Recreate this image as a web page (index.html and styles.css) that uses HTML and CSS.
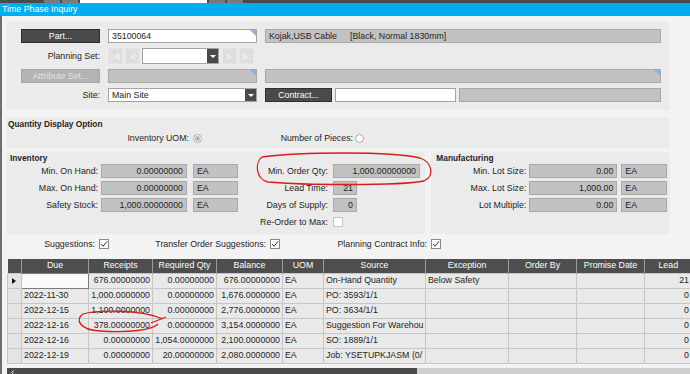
FILE: index.html
```html
<!DOCTYPE html>
<html lang="en">
<head>
  <meta charset="UTF-8" />
  <title>Time Phase Inquiry</title>
  <link rel="stylesheet" href="styles.css">
</head>
<body>
  <div class="topstrip">
    <span class="ts-grey"></span><span class="ts-grey"></span><span class="ts-white"></span><span class="ts-grey"></span><span class="ts-grey"></span>
  </div>
  <div class="titlebar">Time Phase Inquiry</div>

  <div class="main">
    <!-- Part / site header -->
    <div class="panel head">
      <div class="btn">Part...</div>
      <div class="field white corner">35100064</div>
      <div class="field">Kojak,USB Cable<span class="desc-gap">[Black, Normal 1830mm]</span></div>

      <div class="lbl">Planning Set:</div>
      <div class="nav">
        <span class="nav-btn"><svg width="9" height="9" viewBox="0 0 9 9"><path d="M1 1v7M8 1L3 4.5 8 8z" fill="#ececec" stroke="#ececec"/></svg></span>
        <span class="nav-btn"><svg width="9" height="9" viewBox="0 0 9 9"><path d="M7 1L2 4.5 7 8z" fill="#ececec"/></svg></span>
        <div class="combo"><span class="combo-text"></span><span class="drop"></span></div>
        <span class="nav-btn"><svg width="9" height="9" viewBox="0 0 9 9"><path d="M2 1l5 3.5L2 8z" fill="#ececec"/></svg></span>
        <span class="nav-btn"><svg width="9" height="9" viewBox="0 0 9 9"><path d="M8 1v7M1 1l5 3.5L1 8z" fill="#ececec" stroke="#ececec"/></svg></span>
      </div>
      <div></div>

      <div class="btn disabled">Attribute Set...</div>
      <div class="field corner"></div>
      <div class="field corner"></div>

      <div class="lbl">Site:</div>
      <div class="combo"><span class="combo-text">Main Site</span><span class="drop"></span></div>
      <div class="contract-row">
        <div class="btn contract">Contract...</div>
        <div class="field white contract-input"></div>
        <div class="field fill"></div>
      </div>
    </div>

    <!-- Quantity display option -->
    <div class="panel qty">
      <div class="title">Quantity Display Option</div>
      <div class="qty-row">
        <span class="lbl uom-lbl">Inventory UOM:</span><span class="radio checked"></span>
        <span class="lbl pcs-lbl">Number of Pieces:</span><span class="radio"></span>
      </div>
    </div>

    <!-- Inventory / manufacturing -->
    <div class="lower">
      <div class="panel inv">
        <div class="title pad">Inventory</div>
        <div class="inv-body">
          <div class="stack">
            <div class="row"><span class="lbl w92">Min. On Hand:</span><div class="field num f86">0.00000000</div><div class="field ea">EA</div></div>
            <div class="row"><span class="lbl w92">Max. On Hand:</span><div class="field num f86">0.00000000</div><div class="field ea">EA</div></div>
            <div class="row"><span class="lbl w92">Safety Stock:</span><div class="field num f86">1,000.00000000</div><div class="field ea">EA</div></div>
          </div>
          <div class="stack">
            <div class="row"><span class="lbl w90">Min. Order Qty:</span><div class="field num f87">1,000.00000000</div></div>
            <div class="row"><span class="lbl w90">Lead Time:</span><div class="field num f24">21</div></div>
            <div class="row"><span class="lbl w90">Days of Supply:</span><div class="field num f24">0</div></div>
            <div class="row"><span class="lbl w90">Re-Order to Max:</span><span class="check empty"></span></div>
          </div>
        </div>
      </div>
      <div class="panel mfg">
        <div class="title pad">Manufacturing</div>
        <div class="stack">
          <div class="row"><span class="lbl w95">Min. Lot Size:</span><div class="field num f88">0.00</div><div class="field ea2">EA</div></div>
          <div class="row"><span class="lbl w95">Max. Lot Size:</span><div class="field num f88">1,000.00</div><div class="field ea2">EA</div></div>
          <div class="row"><span class="lbl w95">Lot Multiple:</span><div class="field num f88">0.00</div><div class="field ea2">EA</div></div>
        </div>
      </div>
    </div>

    <div class="checks">
      <span class="lbl c1">Suggestions:</span>
      <span class="check"><svg width="10" height="10" viewBox="0 0 10 10"><path d="M2 5l2 2.3L8 2.3" fill="none" stroke="#333" stroke-width="1"/></svg></span>
      <span class="lbl c2">Transfer Order Suggestions:</span>
      <span class="check"><svg width="10" height="10" viewBox="0 0 10 10"><path d="M2 5l2 2.3L8 2.3" fill="none" stroke="#333" stroke-width="1"/></svg></span>
      <span class="lbl c3">Planning Contract Info:</span>
      <span class="check"><svg width="10" height="10" viewBox="0 0 10 10"><path d="M2 5l2 2.3L8 2.3" fill="none" stroke="#333" stroke-width="1"/></svg></span>
    </div>

    <!-- Time phase grid -->
    <div class="grid-wrap">
      <table class="grid">
        <colgroup>
          <col style="width:14px"><col style="width:67px"><col style="width:64px"><col style="width:64px">
          <col style="width:66px"><col style="width:41px"><col style="width:102px"><col style="width:83px">
          <col style="width:68px"><col style="width:68px"><col style="width:47px">
        </colgroup>
        <thead>
          <tr><th></th><th>Due</th><th>Receipts</th><th>Required Qty</th><th>Balance</th><th>UOM</th><th>Source</th><th>Exception</th><th>Order By</th><th>Promise Date</th><th>Lead</th></tr>
        </thead>
        <tbody>
          <tr class="current"><td class="rh"><span class="arrow"></span></td><td class="focus"></td><td class="r">676.00000000</td><td class="r">0.00000000</td><td class="r">676.00000000</td><td>EA</td><td>On-Hand Quantity</td><td>Below Safety</td><td></td><td></td><td class="r">21</td></tr>
          <tr><td class="rh"></td><td>2022-11-30</td><td class="r">1,000.0000000</td><td class="r">0.00000000</td><td class="r">1,676.0000000</td><td>EA</td><td>PO: 3593/1/1</td><td></td><td></td><td></td><td class="r">0</td></tr>
          <tr><td class="rh"></td><td>2022-12-15</td><td class="r">1,100.0000000</td><td class="r">0.00000000</td><td class="r">2,776.0000000</td><td>EA</td><td>PO: 3634/1/1</td><td></td><td></td><td></td><td class="r">0</td></tr>
          <tr><td class="rh"></td><td>2022-12-16</td><td class="r">378.00000000</td><td class="r">0.00000000</td><td class="r">3,154.0000000</td><td>EA</td><td>Suggestion For Warehou</td><td></td><td></td><td></td><td class="r">0</td></tr>
          <tr><td class="rh"></td><td>2022-12-16</td><td class="r">0.00000000</td><td class="r">1,054.0000000</td><td class="r">2,100.0000000</td><td>EA</td><td>SO: 1889/1/1</td><td></td><td></td><td></td><td class="r">0</td></tr>
          <tr><td class="rh"></td><td>2022-12-19</td><td class="r">0.00000000</td><td class="r">20.00000000</td><td class="r">2,080.0000000</td><td>EA</td><td>Job: YSETUPKJASM (0/</td><td></td><td></td><td></td><td class="r">0</td></tr>
        </tbody>
      </table>
    </div>
    <div class="hscroll">
      <div class="thumb"><svg width="6" height="7" viewBox="0 0 6 7"><path d="M4 1.5L1.5 3.5 4 5.5" fill="none" stroke="#ddd"/></svg></div>
      <div class="track"></div>
    </div>
  </div>

  <!-- red hand-drawn markup -->
  <svg class="marks" width="690" height="374" viewBox="0 0 690 374">
    <path d="M262 157 C300 152 390 151 420 158 C432 162 435 176 424 181 C400 186 300 185 268 182 C255 179 255 162 262 157" fill="none" stroke="#d91c1c" stroke-width="1.3"/>
    <path d="M163 319 C140 309 96 310 83 314 C75 319 79 330 100 331 C130 333 152 330 158 324 M151 323 L166 317" fill="none" stroke="#d91c1c" stroke-width="1.3"/>
  </svg>
</body>
</html>
```

FILE: styles.css
```css
* {
  box-sizing: border-box;
}
body {
  margin: 0;
  width: 690px;
  height: 374px;
  overflow: hidden;
  position: relative;
  background: #f3f3f4;
  font-family: "Liberation Sans", Arial, sans-serif;
  font-size: 8.8px;
  color: #1e1e1e;
}
.topstrip {
  height: 3px;
  background: #4b4b4b;
  display: flex;
  gap: 2px;
  padding-left: 44px;
}
.ts-grey {
  width: 16px;
  background: #7a7a7a;
}
.ts-white {
  width: 127px;
  background: #fff;
}
.titlebar {
  height: 13px;
  line-height: 13px;
  background: #00aeef;
  color: #fff;
  padding-left: 2px;
}
.main {
  border-left: 2px solid #6e6e6e;
  padding: 6px 20px 0 4px;
  height: 358px;
}
.panel {
  background: #ebebeb;
  border-radius: 4px;
}
.title {
  font-weight: bold;
  font-size: 8.3px;
  line-height: 10px;
}
.title.pad {
  padding-left: 4px;
  height: 11px;
}
.lbl {
  text-align: right;
  white-space: nowrap;
}

/* header panel */
.head {
  height: 88px;
  padding: 7px 0 0 15px;
  display: grid;
  grid-template-columns: 79px 149px 396px;
  grid-template-rows: 14px 16px 14px 14px;
  column-gap: 8px;
  row-gap: 5px;
  align-items: center;
}
.btn {
  height: 14px;
  line-height: 12px;
  border: 1px solid #2e2e2e;
  background: #4a4a4a;
  color: #fff;
  text-align: center;
}
.btn.disabled {
  background: #b3b3b3;
  border-color: #a6a6a6;
  color: #e2e2e2;
}
.field {
  height: 14px;
  line-height: 12px;
  border: 1px solid #a9a9a9;
  background: #c2c2c2;
  padding: 0 3px;
  white-space: nowrap;
  overflow: hidden;
  position: relative;
}
.field.white {
  background: #fff;
  border-color: #a3a3a3;
}
.field.num {
  text-align: right;
}
.corner::after {
  content: "";
  position: absolute;
  top: 0;
  right: 0;
  border-style: solid;
  border-width: 0 6px 6px 0;
  border-color: transparent #86b4e4 transparent transparent;
}
.desc-gap {
  margin-left: 13px;
}
.nav {
  display: flex;
  align-items: center;
  height: 16px;
  gap: 2px;
}
.nav-btn {
  width: 15px;
  height: 16px;
  background: #dedede;
  border: 1px solid #e6e6e6;
  display: flex;
  align-items: center;
  justify-content: center;
}
.nav .combo {
  width: 77px;
  height: 16px;
  margin-right: 1px;
}
.combo {
  display: flex;
  height: 14px;
  background: #fff;
  border: 1px solid #a3a3a3;
}
.combo-text {
  flex: 1;
  padding-left: 3px;
  line-height: 12px;
}
.drop {
  width: 11px;
  background: #4a4a4a;
  display: flex;
  align-items: center;
  justify-content: center;
}
.drop::after {
  content: "";
  border-style: solid;
  border-width: 3px 3px 0 3px;
  border-color: #fff transparent transparent transparent;
}
.contract-row {
  display: flex;
  gap: 3px;
}
.contract {
  width: 67px;
}
.contract-input {
  width: 121px;
}
.fill {
  flex: 1;
}

/* quantity display option */
.qty {
  margin-top: 7px;
  height: 31px;
  padding: 2px 0 0 2px;
}
.qty-row {
  display: flex;
  align-items: center;
  margin-top: 3px;
  height: 12px;
}
.uom-lbl {
  width: 181px;
}
.pcs-lbl {
  width: 151px;
}
.radio {
  width: 9px;
  height: 9px;
  margin-left: 4px;
  border-radius: 50%;
  border: 1px solid #a9a9a9;
  background: #fff;
  display: flex;
  align-items: center;
  justify-content: center;
}
.pcs-lbl + .radio {
  margin-left: 2px;
}
.radio.checked::after {
  content: "";
  width: 5px;
  height: 5px;
  border-radius: 50%;
  background: #b5b5b5;
}

/* inventory + manufacturing */
.lower {
  display: flex;
  gap: 6px;
  margin-top: 4px;
  height: 82px;
}
.inv {
  width: 420px;
  padding-top: 1px;
}
.mfg {
  width: 239px;
  padding-top: 1px;
}
.mfg .title.pad {
  padding-left: 5px;
}
.inv-body {
  display: flex;
}
.stack {
  display: flex;
  flex-direction: column;
  gap: 3px;
}
.row {
  display: flex;
  align-items: center;
  height: 14px;
}
.w92 { width: 92px; }
.w90 { width: 90px; }
.w95 { width: 95px; }
.f86 { width: 86px; margin-left: 3px; }
.f87 { width: 87px; margin-left: 5px; }
.f24 { width: 24px; margin-left: 5px; }
.f88 { width: 88px; margin-left: 3px; }
.ea { width: 45px; margin-left: 6px; }
.ea2 { width: 46px; margin-left: 4px; }
.check {
  width: 10px;
  height: 10px;
  margin-left: 4px;
  border: 1px solid #8a8a8a;
  background: #fff;
  display: flex;
}
.check svg {
  margin: -1px;
}
.check.empty {
  margin-left: 5px;
  border-color: #c4c4c4;
}

/* checkbox options */
.checks {
  display: flex;
  align-items: center;
  margin-top: 4px;
  height: 11px;
}
.c1 { width: 89px; }
.c2 { width: 157px; }
.c3 { width: 147px; }

/* grid */
.grid-wrap {
  margin: 10px -20px 0 1px;
  overflow: hidden;
}
.grid {
  border-collapse: collapse;
  table-layout: fixed;
  width: 684px;
}
.grid th {
  height: 14px;
  padding: 0;
  background: #4e4e4e;
  color: #fff;
  font-weight: normal;
  line-height: 13px;
  border-left: 1px solid #9a9a9a;
  white-space: nowrap;
}
.grid th:first-child {
  border-left: none;
}
.grid td {
  height: 15px;
  padding: 0 2px;
  line-height: 13px;
  background: #e9e9e9;
  border: 1px solid #c6c6c6;
  white-space: nowrap;
  overflow: hidden;
}
.grid td.r {
  text-align: right;
}
.grid td.rh {
  background: #e4e4e4;
  padding: 0;
}
.grid td.focus {
  background: #fafafa;
  border: 1px solid #7c7c7c;
}
.arrow {
  display: block;
  margin-left: 4px;
  width: 0;
  height: 0;
  border-style: solid;
  border-width: 3px 0 3px 4px;
  border-color: transparent transparent transparent #111;
}
.hscroll {
  display: flex;
  margin: 4px -20px 0 1px;
  height: 8px;
}
.thumb {
  width: 410px;
  background: #4b4b4b;
  padding-left: 3px;
}
.track {
  flex: 1;
  background: #cfcfcf;
}

.marks {
  position: absolute;
  top: 0;
  left: 0;
  pointer-events: none;
}
```
